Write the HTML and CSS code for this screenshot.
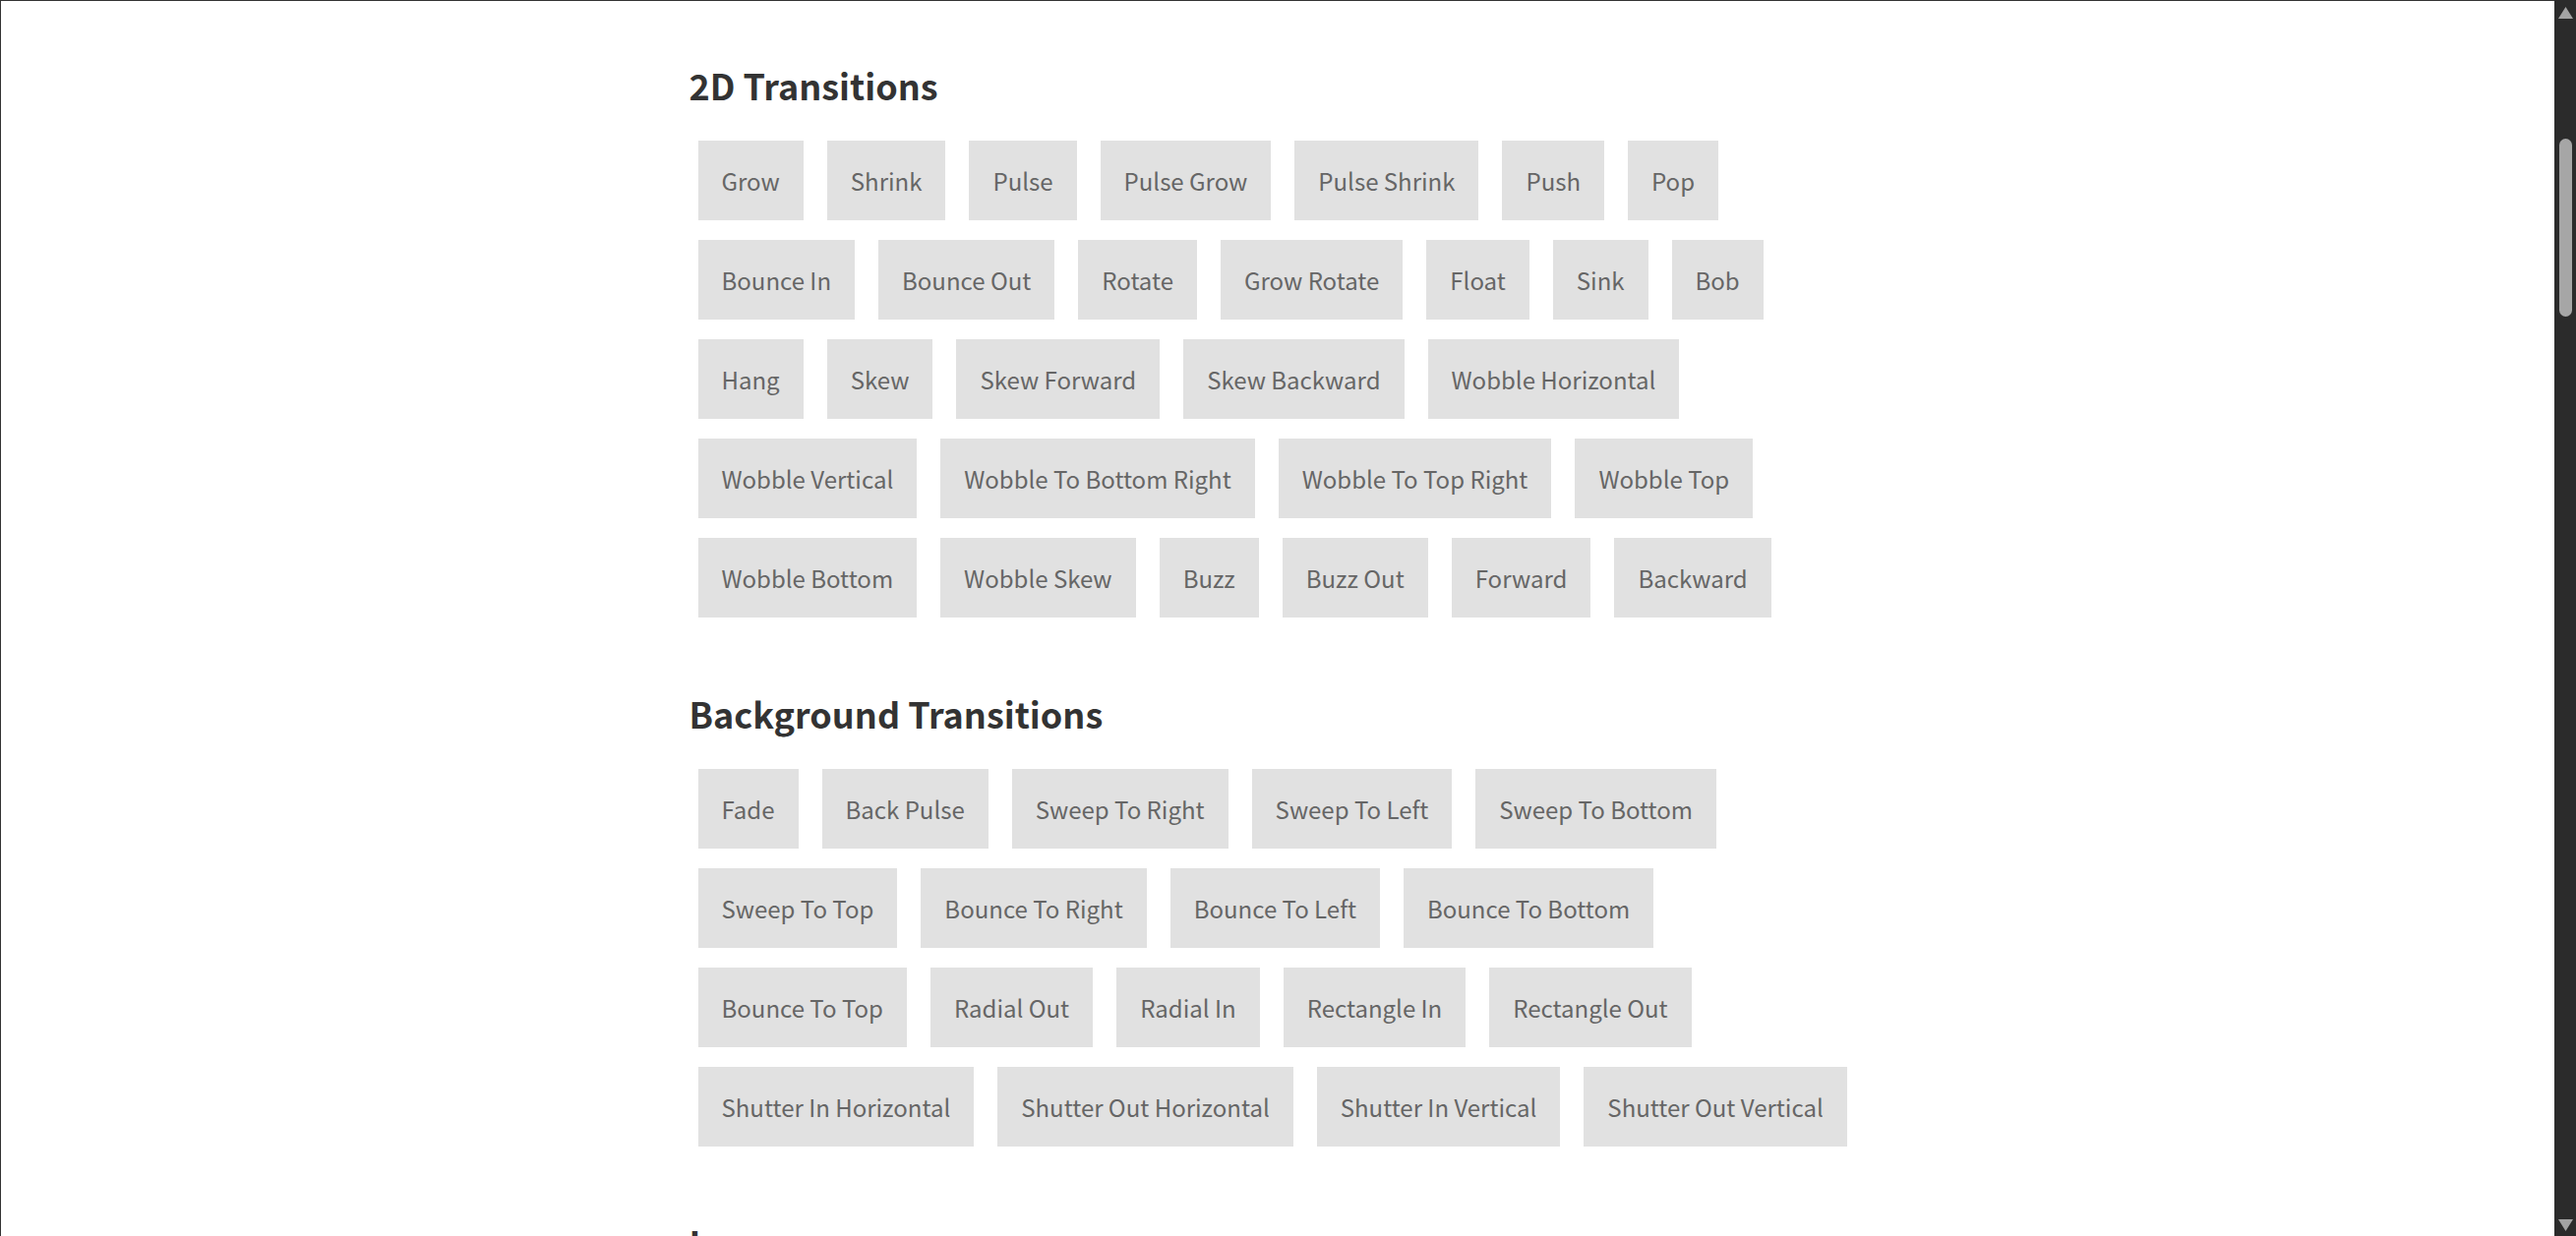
FILE: index.html
```html
<!DOCTYPE html>
<html lang="en">
<head>
    <meta charset="UTF-8">
    <meta name="viewport" content="width=device-width, initial-scale=1.0">
    <title>Hover effects demo</title>
    <link rel="stylesheet" href="styles.css">
</head>
<body>
    <div class="window">
        <!--页面内容-->
        <main class="page">
            <div class="content">
                <section class="group">
                    <h2>2D Transitions</h2>
                    <div class="buttons">
                        <a class="button" href="#">Grow</a>
                        <a class="button" href="#">Shrink</a>
                        <a class="button" href="#">Pulse</a>
                        <a class="button" href="#">Pulse Grow</a>
                        <a class="button" href="#">Pulse Shrink</a>
                        <a class="button" href="#">Push</a>
                        <a class="button" href="#">Pop</a>
                        <a class="button" href="#">Bounce In</a>
                        <a class="button" href="#">Bounce Out</a>
                        <a class="button" href="#">Rotate</a>
                        <a class="button" href="#">Grow Rotate</a>
                        <a class="button" href="#">Float</a>
                        <a class="button" href="#">Sink</a>
                        <a class="button" href="#">Bob</a>
                        <a class="button" href="#">Hang</a>
                        <a class="button" href="#">Skew</a>
                        <a class="button" href="#">Skew Forward</a>
                        <a class="button" href="#">Skew Backward</a>
                        <a class="button" href="#">Wobble Horizontal</a>
                        <a class="button" href="#">Wobble Vertical</a>
                        <a class="button" href="#">Wobble To Bottom Right</a>
                        <a class="button" href="#">Wobble To Top Right</a>
                        <a class="button" href="#">Wobble Top</a>
                        <a class="button" href="#">Wobble Bottom</a>
                        <a class="button" href="#">Wobble Skew</a>
                        <a class="button" href="#">Buzz</a>
                        <a class="button" href="#">Buzz Out</a>
                        <a class="button" href="#">Forward</a>
                        <a class="button" href="#">Backward</a>
                    </div>
                </section>

                <section class="group">
                    <h2>Background Transitions</h2>
                    <div class="buttons">
                        <a class="button" href="#">Fade</a>
                        <a class="button" href="#">Back Pulse</a>
                        <a class="button" href="#">Sweep To Right</a>
                        <a class="button" href="#">Sweep To Left</a>
                        <a class="button" href="#">Sweep To Bottom</a>
                        <a class="button" href="#">Sweep To Top</a>
                        <a class="button" href="#">Bounce To Right</a>
                        <a class="button" href="#">Bounce To Left</a>
                        <a class="button" href="#">Bounce To Bottom</a>
                        <a class="button" href="#">Bounce To Top</a>
                        <a class="button" href="#">Radial Out</a>
                        <a class="button" href="#">Radial In</a>
                        <a class="button" href="#">Rectangle In</a>
                        <a class="button" href="#">Rectangle Out</a>
                        <a class="button" href="#">Shutter In Horizontal</a>
                        <a class="button" href="#">Shutter Out Horizontal</a>
                        <a class="button" href="#">Shutter In Vertical</a>
                        <a class="button" href="#">Shutter Out Vertical</a>
                    </div>
                </section>

                <section class="group">
                    <h2>Icons</h2>
                    <div class="buttons">
                        <a class="button" href="#">Icon Back</a>
                        <a class="button" href="#">Icon Forward</a>
                        <a class="button" href="#">Icon Down</a>
                        <a class="button" href="#">Icon Up</a>
                    </div>
                </section>
            </div>
        </main>

        <!--右侧滚动条-->
        <div class="scrollbar">
            <svg class="arrow" width="15" height="12" viewBox="0 0 15 12"><path d="M7.5 0 L15 12 L0 12 Z"/></svg>
            <div class="track">
                <div class="thumb"></div>
            </div>
            <svg class="arrow" width="15" height="12" viewBox="0 0 15 12"><path d="M0 0 L15 0 L7.5 12 Z"/></svg>
        </div>
    </div>
</body>
</html>
```
FILE: styles.css
```css
*{
    margin:0;
    padding:0;
    box-sizing:border-box;
}
html, body{
    height:100%;
    overflow:hidden;
}
body{
    font-family:"Source Sans Pro", "Noto Sans CJK SC", sans-serif;
    background-color:#fff;
}
.window{
    display:flex;
    height:100vh;
}
/*页面区域*/
.page{
    flex:1;
    overflow:hidden;
    border-top:1px solid #333;
    border-left:1px solid #333;
    padding-top:63px;
}
.content{
    max-width:1197px;
    margin:0 auto;
}
.group + .group{
    margin-top:75px;
}
.group h2{
    font-size:36px;
    line-height:44px;
    font-weight:700;
    color:#333;
    margin-bottom:35px;
}
/*按钮列表*/
.buttons{
    display:flex;
    flex-wrap:wrap;
    gap:20px 24px;
    padding-left:9px;
}
.button{
    display:block;
    padding:24px;
    font-size:24px;
    line-height:33px;
    background-color:#e1e1e1;
    color:#666;
    text-decoration:none;
}
/*滚动条*/
.scrollbar{
    width:22px;
    background-color:#2b2b2b;
    display:flex;
    flex-direction:column;
    align-items:center;
    padding:7px 0 5px;
}
.arrow{
    display:block;
    fill:#a3a3a3;
}
.track{
    flex:1;
    padding-top:122px;
}
.thumb{
    width:13px;
    height:181px;
    border-radius:7px;
    background-color:#a6a6a6;
}
```
